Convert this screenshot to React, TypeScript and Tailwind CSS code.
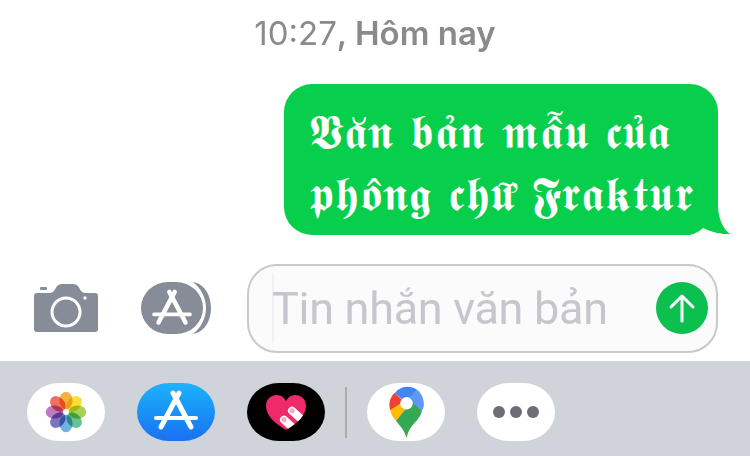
function AppStoreGlyph({ color = "white" }: { color?: string }) {
  return (
    <g stroke={color} strokeLinecap="round" fill="none">
      <path d="M-3 -19 L15 15" strokeWidth="5" />
      <path d="M3 -19 L-15 15" strokeWidth="5" />
      <path d="M-20 6 H20" strokeWidth="4" />
    </g>
  );
}

function CameraIcon() {
  return (
    <svg width="64" height="48" viewBox="0 0 64 48">
      <rect x="6" y="3" width="7" height="3" rx="1" fill="#868d98" />
      <path
        d="M3 9 H16 Q18 9 20 7 L23 2 Q25 0 28 0 H39 Q42 0 44 2 L47 7 Q49 9 51 9 H61 Q64 9 64 12 V45 Q64 48 61 48 H3 Q0 48 0 45 V12 Q0 9 3 9 Z"
        fill="#868d98"
      />
      <circle cx="32" cy="28" r="14" fill="none" stroke="white" strokeWidth="3" />
      <circle cx="51" cy="14" r="1.7" fill="white" />
    </svg>
  );
}

function AppsIcon() {
  return (
    <svg width="70" height="52" viewBox="0 0 70 52">
      <path d="M52 0 C64 2 70 14 70 26 C70 38 64 50 52 52 C60 46 65 36 65 26 C65 16 60 6 52 0 Z" fill="#868d98" />
      <rect x="0" y="0" width="62" height="52" rx="27" ry="26" fill="#868d98" />
      <g transform="translate(31 27) scale(0.9)">
        <AppStoreGlyph />
      </g>
    </svg>
  );
}

function PhotosIcon() {
  const petals = [
    ["#f6a623", 0],
    ["#f7d91e", 45],
    ["#9ccc3c", 90],
    ["#52b788", 135],
    ["#5ba7d9", 180],
    ["#6a63b5", 225],
    ["#b268b8", 270],
    ["#ef5a4f", 315],
  ] as const;
  return (
    <svg width="42" height="42" viewBox="-21 -21 42 42">
      {petals.map(([color, angle]) => (
        <ellipse
          key={angle}
          cx="0"
          cy="-11.5"
          rx="6.6"
          ry="8.8"
          fill={color}
          fillOpacity="0.88"
          transform={`rotate(${angle})`}
          className="mix-blend-multiply"
        />
      ))}
    </svg>
  );
}

function HeartIcon() {
  const heart = "M20 35 C8 28 0 20 0 11 C0 4 5 0 11 0 C15 0 18 2 20 6 C22 2 25 0 29 0 C35 0 40 4 40 11 C40 20 32 28 20 35 Z";
  return (
    <svg width="40" height="35" viewBox="0 0 40 35">
      <defs>
        <clipPath id="heart-clip">
          <path d={heart} />
        </clipPath>
      </defs>
      <path d={heart} fill="#f0296b" />
      <g clipPath="url(#heart-clip)">
        <g transform="rotate(42 23 13)">
          <rect x="23" y="9" width="26" height="8" rx="4" fill="white" />
          <circle cx="27" cy="13" r="2.6" fill="#f5a9c3" />
        </g>
        <g transform="rotate(42 15 22)">
          <rect x="15" y="18" width="26" height="8" rx="4" fill="white" />
          <circle cx="19" cy="22" r="2.6" fill="#f5a9c3" />
        </g>
      </g>
    </svg>
  );
}

function MapsIcon() {
  return (
    <svg width="37" height="52" viewBox="0 0 36 54">
      <path d="M18 54 C16 46 11 41 7 36 L24 15 L34 26 C32 34 26 38 22 44 C20 47 19 50 18 54 Z" fill="#34a853" />
      <path d="M7 36 C4 33 2 29 1 25 L13 12 L24 15 Z" fill="#fbbc04" />
      <path d="M1 25 C-1 18 1 11 6 7 L15 16 Z" fill="#ea4335" />
      <path d="M6 7 C12 0 22 -1 29 4 L18 18 Z" fill="#4285f4" />
      <path d="M29 4 C34 8 36 14 36 19 C36 22 35 24 34 26 L20 13 Z" fill="#5e97f6" />
      <circle cx="18" cy="18" r="6.5" fill="white" />
    </svg>
  );
}

function DockPill({ children, dark, blue }: { children?: React.ReactNode; dark?: boolean; blue?: boolean }) {
  return (
    <div
      className={`w-[78px] h-[58px] rounded-[32px/29px] flex items-center justify-center ${
        dark ? "bg-black" : blue ? "bg-gradient-to-b from-[#1fb2fb] to-[#1c70f2]" : "bg-white"
      }`}
    >
      {children}
    </div>
  );
}

export default function App() {
  return (
    <div className="w-[750px] h-[456px] bg-white flex flex-col overflow-hidden font-['Inter','Liberation_Sans',sans-serif]">
      {/* timestamp */}
      <div className="h-[84px] pt-[12px] text-center text-[33px] leading-[42px] text-[#8a8a8e]">
        10:27<span className="font-semibold">, Hôm nay</span>
      </div>

      {/* message */}
      <div className="flex justify-end pr-[32px]">
        <div className="relative w-[434px] h-[151px] rounded-[28px] bg-[#08cf4b] pl-[25px] pt-[17px] text-white text-[48px] leading-[62px] tracking-[0.9px] font-['DejaVu_Serif','Liberation_Serif',serif] whitespace-nowrap">
          <div>𝖁𝖆̆𝖓 𝖇𝖆̉𝖓 𝖒𝖆̂̃𝖚 𝖈𝖚̉𝖆</div>
          <div>𝖕𝖍𝖔̂𝖓𝖌 𝖈𝖍𝖚̛̃ 𝕱𝖗𝖆𝖐𝖙𝖚𝖗</div>
          <svg className="absolute right-[-14px] bottom-[-1px]" width="42" height="31" viewBox="0 0 42 31">
            <path d="M5 0 H28 C28 13 33 25 41 29.5 Q24 29 13 23 Q8 28 0 30 Z" fill="#08cf4b" />
            <path d="M0 30 Q8 28 13 23 Q24 29 41 29.5 L42 31 H0 Z" fill="white" />
          </svg>
        </div>
      </div>

      {/* composer */}
      <div className="flex items-center h-[126px] pl-[34px] pr-[32px] pt-[20px]">
        <CameraIcon />
        <div className="ml-[43px]">
          <AppsIcon />
        </div>
        <div className="ml-[36px] flex-1 h-[89px] rounded-[30px] border-2 border-[#c9c9cd] bg-[#fbfbfc] flex items-center pl-[23px] pr-[8px]">
          <div className="w-[2px] h-[70px] -mr-[2px] bg-[#f1f1f4]" />
          <span className="flex-1 pt-[2px] text-[45px] tracking-[-0.3px] text-[#c6c6cc] font-['Roboto',sans-serif] whitespace-nowrap">Tin nhắn văn bản</span>
          <div className="w-[52px] h-[52px] rounded-full bg-[#0bc04f] flex items-center justify-center">
            <svg width="30" height="30" viewBox="0 0 30 30" fill="none" stroke="white" strokeWidth="3" strokeLinecap="round" strokeLinejoin="round">
              <path d="M15 28 V4 M4 14 L15 3 L26 14" />
            </svg>
          </div>
        </div>
      </div>

      {/* app tray */}
      <div className="flex-1 bg-[#d0d4da] flex items-center pl-[27px] pt-[7px] gap-[32px]">
        <DockPill>
          <PhotosIcon />
        </DockPill>
        <DockPill blue>
          <svg width="50" height="44" viewBox="-25 -22 50 44">
            <AppStoreGlyph />
          </svg>
        </DockPill>
        <DockPill dark>
          <HeartIcon />
        </DockPill>
        <div className="w-[2px] h-[51px] bg-[#a9abb1] -mx-[12px]" />
        <DockPill>
          <MapsIcon />
        </DockPill>
        <DockPill>
          <div className="flex gap-[5px]">
            <div className="w-[12px] h-[12px] rounded-full bg-[#6d6d75]" />
            <div className="w-[12px] h-[12px] rounded-full bg-[#6d6d75]" />
            <div className="w-[12px] h-[12px] rounded-full bg-[#6d6d75]" />
          </div>
        </DockPill>
      </div>
    </div>
  );
}
